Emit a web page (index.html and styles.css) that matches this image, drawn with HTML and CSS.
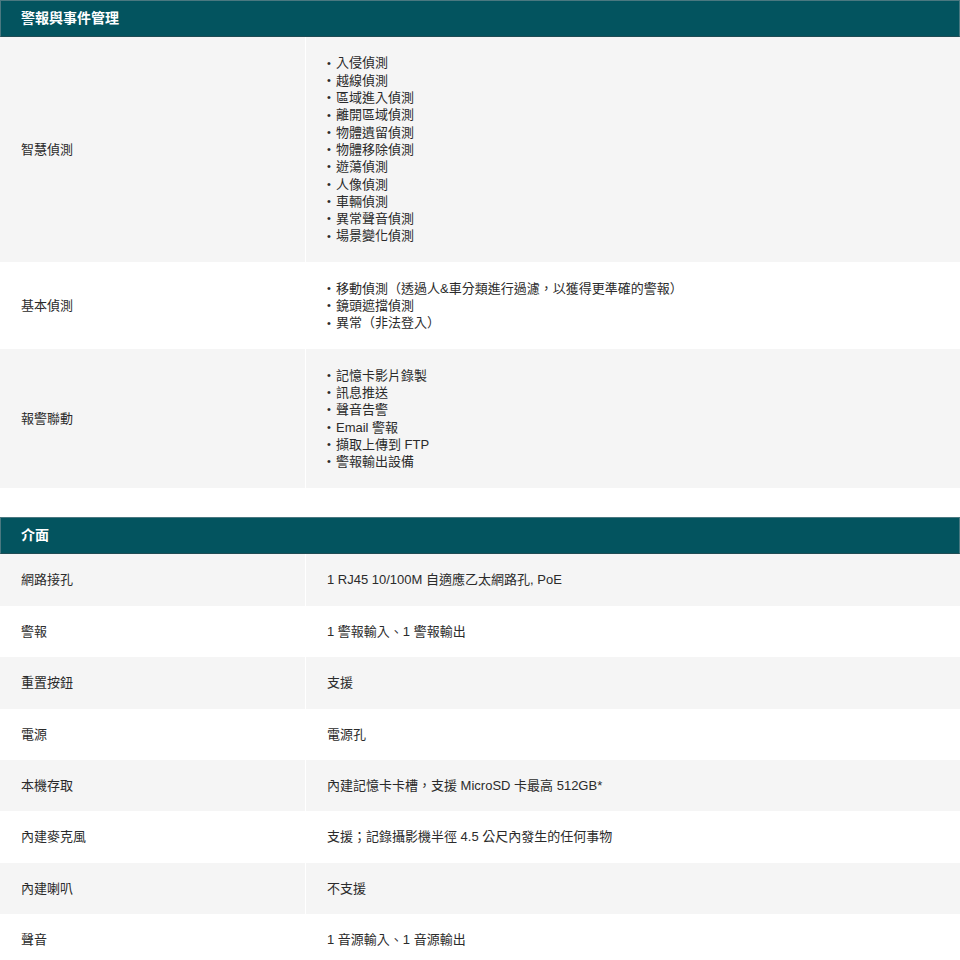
FILE: index.html
```html
<!DOCTYPE html>
<html lang="zh-Hant">
<head>
<meta charset="utf-8">
<title>規格</title>
<link rel="stylesheet" href="styles.css">
</head>
<body>
<section class="spec">
  <h2 class="spec-head">警報與事件管理</h2>
  <div class="spec-table">
    <div class="row gray">
      <div class="label">智慧偵測</div>
      <ul class="value list">
        <li>入侵偵測</li>
        <li>越線偵測</li>
        <li>區域進入偵測</li>
        <li>離開區域偵測</li>
        <li>物體遺留偵測</li>
        <li>物體移除偵測</li>
        <li>遊蕩偵測</li>
        <li>人像偵測</li>
        <li>車輛偵測</li>
        <li>異常聲音偵測</li>
        <li>場景變化偵測</li>
      </ul>
    </div>
    <div class="row">
      <div class="label">基本偵測</div>
      <ul class="value list">
        <li>移動偵測（透過人&amp;車分類進行過濾，以獲得更準確的警報）</li>
        <li>鏡頭遮擋偵測</li>
        <li>異常（非法登入）</li>
      </ul>
    </div>
    <div class="row gray">
      <div class="label">報警聯動</div>
      <ul class="value list">
        <li>記憶卡影片錄製</li>
        <li>訊息推送</li>
        <li>聲音告警</li>
        <li>Email 警報</li>
        <li>擷取上傳到 FTP</li>
        <li>警報輸出設備</li>
      </ul>
    </div>
  </div>
</section>

<section class="spec second">
  <h2 class="spec-head">介面</h2>
  <div class="spec-table">
    <div class="row gray"><div class="label">網路接孔</div><div class="value">1 RJ45 10/100M 自適應乙太網路孔, PoE</div></div>
    <div class="row"><div class="label">警報</div><div class="value">1 警報輸入、1 警報輸出</div></div>
    <div class="row gray"><div class="label">重置按鈕</div><div class="value">支援</div></div>
    <div class="row"><div class="label">電源</div><div class="value">電源孔</div></div>
    <div class="row gray"><div class="label">本機存取</div><div class="value">內建記憶卡卡槽，支援 MicroSD 卡最高 512GB*</div></div>
    <div class="row"><div class="label">內建麥克風</div><div class="value">支援；記錄攝影機半徑 4.5 公尺內發生的任何事物</div></div>
    <div class="row gray"><div class="label">內建喇叭</div><div class="value">不支援</div></div>
    <div class="row"><div class="label">聲音</div><div class="value">1 音源輸入、1 音源輸出</div></div>
  </div>
</section>
</body>
</html>
```

FILE: styles.css
```css
html, body {
  margin: 0;
  padding: 0;
  background: #ffffff;
}
body {
  font-family: "Liberation Sans", "Noto Sans CJK TC", sans-serif;
  font-size: 13px;
  color: #2b2b2b;
}
.spec {
  width: 960px;
}
.spec.second {
  margin-top: 29.5px;
}
.spec-head {
  margin: 0;
  height: 35px;
  line-height: 35px;
  padding: 0 20px;
  background: #03545f;
  border: 1px solid #4a7880;
  border-bottom: 1px solid #1f4c54;
  box-shadow: 0 1px 0 #cfe7ea;
  color: #ffffff;
  font-size: 14px;
  font-weight: bold;
}
.spec-table {
  display: flex;
  flex-direction: column;
}
.row {
  display: grid;
  grid-template-columns: 305px 1fr;
  column-gap: 1px;
  background: #ffffff;
}
.row > div, .row > ul {
  background: #ffffff;
}
.row.gray > .label, .row.gray > .value {
  background: #f5f5f5;
}
.label {
  display: flex;
  align-items: center;
  padding: 17px 21px;
  line-height: 17.4px;
}
.value {
  margin: 0;
  padding: 17px 21px;
  height: 17.4px;
  line-height: 17.4px;
  display: flex;
  align-items: center;
}
.list {
  display: flex;
  flex-direction: column;
  align-items: stretch;
  height: auto;
  list-style: none;
  padding-top: 17.5px;
  padding-bottom: 17.5px;
}
.list li {
  display: flex;
  align-items: center;
  height: 17.3px;
  white-space: nowrap;
}
.list li::before {
  content: "•";
  width: 9px;
  font-size: 11px;
  line-height: 1;
}
```
